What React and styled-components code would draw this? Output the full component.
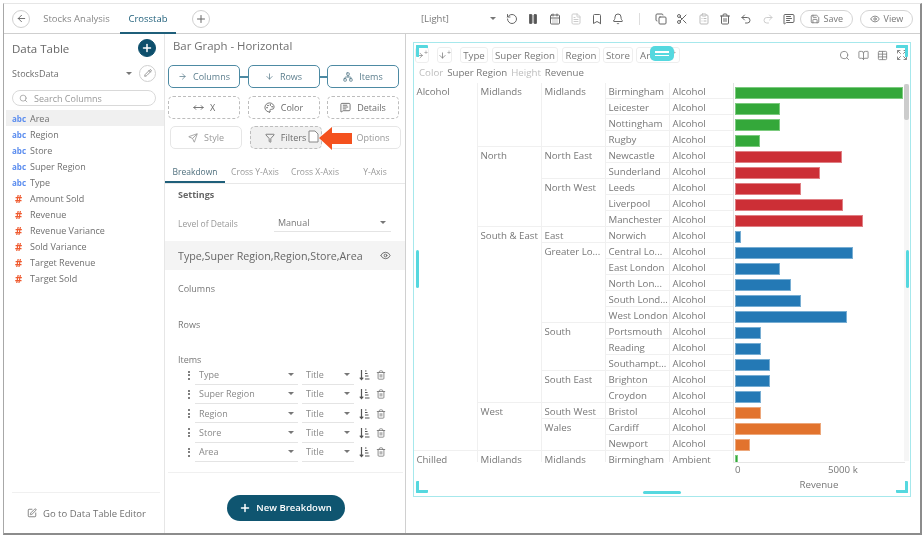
import React from "react";
import styled, { createGlobalStyle } from "styled-components";
import {
  ArrowLeft, Plus, RotateCw, Pause, Bookmark, Bell, Copy, Scissors, ClipboardList, Trash2, Undo2, Redo2,
  MessageSquareText, Eye, Search, Funnel, Palette, Settings, Pencil, Network, MoveHorizontal, ArrowRight,
  ArrowDown, SquarePen, Table, BookOpen, Expand, Save, FileText, Send, CalendarDays,
} from "lucide-react";

const Global = createGlobalStyle`
  html, body { margin: 0; padding: 0; background: #fff; width: 924px; height: 537px; overflow: hidden; }
  #root { width: 924px; height: 537px; }
  * { box-sizing: border-box; }
`;

const Frame = styled.div`
  margin: 3px 2px 2px 3px;
  width: 919px;
  height: 532px;
  border-left: 1px solid #a8a8a8;
  border-right: 2px solid #8c8c8c;
  border-bottom: 2px solid #8c8c8c;
  border-top: 1px solid #e6e6e6;
  display: flex;
  flex-direction: column;
  font-family: "Open Sans", "Liberation Sans", sans-serif;
  font-size: 9px;
  color: #6b6b6b;
  filter: blur(0.45px);
`;

const TopBar = styled.div`
  height: 30px;
  flex: none;
  display: flex;
  align-items: center;
  border-bottom: 1px solid #cfcfcf;
  padding-left: 8px;
`;

const RoundBtn = styled.button`
  width: ${(p) => p.$size || 18}px;
  height: ${(p) => p.$size || 18}px;
  margin-left: ${(p) => p.$ml || 0}px;
  flex: none;
  border-radius: 50%;
  border: 1px solid ${(p) => (p.$solid ? "#0d4f6c" : "#cfcfcf")};
  background: ${(p) => (p.$solid ? "#0d4f6c" : "#fff")};
  color: ${(p) => (p.$solid ? "#fff" : "#666")};
  display: flex;
  align-items: center;
  justify-content: center;
  padding: 0;
`;

const Tab = styled.div`
  height: 29px;
  display: flex;
  align-items: center;
  justify-content: center;
  width: ${(p) => p.$w}px;
  padding-left: ${(p) => p.$pl || 0}px;
  color: ${(p) => (p.$active ? "#1f5f7a" : "#888")};
  font-size: 9.5px;
  border-bottom: 2px solid ${(p) => (p.$active ? "#1f5f7a" : "transparent")};
  margin-bottom: -1px;
`;

const ThemeName = styled.div`
  margin-left: 211px;
  width: 69px;
  font-size: 9.5px;
  color: #777;
`;

const Caret = styled.span`
  display: inline-block;
  flex: none;
  width: 0;
  height: 0;
  border-left: ${(p) => p.$s || 3}px solid transparent;
  border-right: ${(p) => p.$s || 3}px solid transparent;
  border-top: ${(p) => p.$s || 3}px solid #777;
`;

const ToolIcons = styled.div`
  display: flex;
  align-items: center;
  color: #666;
  margin-left: 10px;
  gap: 9.3px;
  & > svg { flex: none; }
`;

const Divider = styled.span`
  width: 1px;
  height: 12px;
  background: #ddd;
  margin: 0 5.5px;
`;

const Pill = styled.button`
  height: 18px;
  width: ${(p) => p.$w}px;
  margin-left: ${(p) => p.$ml || 0}px;
  flex: none;
  border: 1px solid #d4d4d4;
  border-radius: 9px;
  background: #fff;
  font: inherit;
  font-size: 9px;
  color: #777;
  display: flex;
  align-items: center;
  justify-content: center;
  gap: 4px;
  padding: 0;
`;

const Body = styled.div`
  flex: 1;
  min-height: 0;
  display: flex;
`;

const LeftPanel = styled.aside`
  width: 161px;
  flex: none;
  border-right: 1px solid #e6e6e6;
  display: flex;
  flex-direction: column;
  padding-left: 2px;
`;

const LeftHead = styled.div`
  height: 27px;
  padding: 1px 8px 0 6px;
  display: flex;
  align-items: center;
  justify-content: space-between;
  font-size: 11.5px;
  color: #666;
`;

const SourceRow = styled.div`
  height: 26px;
  padding: 0 8px 2px 6px;
  display: flex;
  align-items: center;
  font-size: 9px;
  color: #6d6d6d;
  & > span:first-child { flex: 1; }
  & > ${Caret} { margin-right: 7px; }
`;

const SearchBox = styled.div`
  height: 16px;
  margin: 3px 6px 4px 6px;
  width: 144px;
  border: 1px solid #d9d9d9;
  border-radius: 8px;
  display: flex;
  align-items: center;
  gap: 6px;
  padding-left: 6px;
  font-size: 9px;
  color: #999;
`;

const FieldList = styled.div`
  flex: 1;
`;

const Field = styled.div`
  height: 16px;
  display: flex;
  align-items: center;
  padding-left: 6px;
  font-size: 9px;
  color: #6f6f6f;
  background: ${(p) => (p.$sel ? "#f0f0f0" : "transparent")};
`;

const FieldType = styled.span`
  width: 18px;
  flex: none;
  color: ${(p) => (p.$num ? "#ef5a2f" : "#5b8def")};
  font-size: ${(p) => (p.$num ? 11 : 8)}px;
  font-weight: 700;
  text-align: ${(p) => (p.$num ? "center" : "left")};
  padding-right: ${(p) => (p.$num ? 5 : 0)}px;
`;

const LeftFoot = styled.div`
  height: 41px;
  margin: 0 4px 0 6px;
  border-top: 1px solid #f0f0f0;
  display: flex;
  align-items: center;
  padding: 0 0 0 15px;
  gap: 6px;
  font-size: 9.5px;
  color: #707070;
`;

const MidPanel = styled.section`
  width: 241px;
  flex: none;
  border-right: 1px solid #d0d0d0;
  display: flex;
  flex-direction: column;
`;

const MidTitle = styled.div`
  height: 31px;
  padding: 4px 0 0 8px;
  line-height: 16px;
  font-size: 11.4px;
  color: #707070;
`;

const BtnRow = styled.div`
  display: grid;
  grid-template-columns: repeat(3, 72px);
  column-gap: 7.5px;
  padding-left: ${(p) => p.$pl || 3}px;
  margin-bottom: ${(p) => p.$mb || 0}px;
`;

const SlotBtn = styled.div`
  position: relative;
  height: 23px;
  border-radius: 5px;
  display: flex;
  align-items: center;
  justify-content: center;
  gap: 6px;
  font-size: 9px;
  color: ${(p) => (p.$kind === "solid" ? "#5d7f8e" : p.$kind === "plain" ? "#999" : "#6b6b6b")};
  border: ${(p) =>
    p.$kind === "solid" ? "1.5px solid #4d8aa3" : p.$kind === "plain" ? "1px solid #e6e6e6" : "1px dashed #bdbdbd"};
  background: ${(p) => (p.$active ? "#f0f0f0" : "#fff")};
  ${(p) =>
    p.$link &&
    `&::after { content: ""; position: absolute; right: -9px; top: 10px; width: 8px; height: 1.5px; background: #4d8aa3; }`}
`;

const DragArrow = styled.svg`
  position: absolute;
  left: 57px;
  top: -3px;
  z-index: 3;
`;

const MidTabs = styled.div`
  margin-top: 14px;
  height: 21px;
  display: grid;
  grid-template-columns: repeat(4, 60px);
  border-bottom: 1px solid #e8e8e8;
`;

const MidTab = styled.div`
  display: flex;
  align-items: center;
  justify-content: center;
  padding-bottom: 4px;
  font-size: 8.5px;
  white-space: nowrap;
  color: ${(p) => (p.$active ? "#50707e" : "#9a9a9a")};
  box-shadow: ${(p) => (p.$active ? "inset 0 -2px 0 #1f5f7a" : "none")};
`;

const SectionHead = styled.div`
  height: 22px;
  padding: 0 0 2px 13px;
  display: flex;
  align-items: center;
  font-size: 9px;
  font-weight: 700;
  color: #666;
`;

const DetailRow = styled.div`
  height: 35px;
  padding: 12px 14px 0 13px;
  display: flex;
  align-items: flex-start;
  font-size: 8.5px;
  color: #999;
`;

const DetailSelect = styled.div`
  margin: -4px 0 0 auto;
  width: 117px;
  height: 18px;
  border-bottom: 1px solid #e4e4e4;
  padding: 0 5px 0 4px;
  display: flex;
  align-items: center;
  justify-content: space-between;
  font-size: 9px;
  color: #777;
`;

const Band = styled.div`
  height: 29px;
  background: #f4f4f4;
  padding: 0 14px 0 13px;
  display: flex;
  align-items: center;
  justify-content: space-between;
  font-size: 10.7px;
  color: #666;
  white-space: nowrap;
`;

const SlotLabel = styled.div`
  height: 35.5px;
  padding: 13px 0 0 13px;
  font-size: 9px;
  line-height: 12px;
  color: #777;
`;

const ItemList = styled.div`
  margin-top: -11px;
  padding-left: 18px;
  height: 106px;
`;

const ItemRow = styled.div`
  height: 19.25px;
  display: flex;
  align-items: center;
`;

const Kebab = styled.span`
  width: 12px;
  flex: none;
  display: flex;
  flex-direction: column;
  align-items: center;
  gap: 1.5px;
  & > i { width: 2px; height: 2px; background: #555; display: block; border-radius: 1px; }
`;

const ItemSelect = styled.div`
  width: ${(p) => p.$w}px;
  margin-left: ${(p) => p.$ml || 0}px;
  height: 19.25px;
  padding: 0 4px;
  flex: none;
  display: flex;
  align-items: center;
  justify-content: space-between;
  border-bottom: 1px solid #e4e4e4;
  font-size: 9px;
  color: #888;
`;

const ItemIcons = styled.div`
  display: flex;
  align-items: center;
  margin-left: 5px;
  gap: 6px;
  color: #777;
`;

const MidFoot = styled.div`
  flex: 1;
  margin: 0 2px 0 3px;
  border-top: 1px solid #f0f0f0;
  display: flex;
  justify-content: center;
  padding-top: 22px;
`;

const PrimaryBtn = styled.button`
  width: 118px;
  height: 26px;
  border: 0;
  border-radius: 13px;
  background: #0f5570;
  color: #fff;
  font: inherit;
  font-size: 9.5px;
  font-weight: 600;
  display: flex;
  align-items: center;
  justify-content: center;
  gap: 5px;
  padding: 0;
`;

const RightPanel = styled.main`
  flex: 1;
  min-width: 0;
  padding: 8px 0 0 7px;
`;

const Widget = styled.div`
  position: relative;
  width: 498px;
  height: 455px;
  border: 1px solid #a6e8ec;
  display: flex;
  flex-direction: column;
`;

const WidgetHead = styled.div`
  height: 20px;
  flex: none;
  padding: 4px 2px 0 1px;
  display: flex;
  align-items: center;
`;

const Chip = styled.div`
  height: 16px;
  width: ${(p) => p.$w}px;
  margin-left: ${(p) => p.$ml || 0}px;
  flex: none;
  border: 1px solid #eeeeee;
  border-radius: 3px;
  padding: 0 ${(p) => (p.$split ? 3 : 0)}px;
  display: flex;
  align-items: center;
  justify-content: ${(p) => (p.$split ? "space-between" : "center")};
  font-size: 9.7px;
  color: #777;
  white-space: nowrap;
`;

const ChipPlus = styled.sup`
  font-size: 7px;
  line-height: 7px;
  margin-bottom: 5px;
  color: #888;
`;

const HeadIcons = styled.div`
  margin-left: auto;
  display: flex;
  align-items: center;
  gap: 8px;
  color: #888;
`;

const Legend = styled.div`
  height: 20px;
  flex: none;
  padding: 0 0 2px 5px;
  display: flex;
  align-items: center;
  gap: 4px;
  font-size: 9.7px;
`;

const LegendKey = styled.span`
  color: #bdbdbd;
`;

const LegendVal = styled.span`
  color: #777;
`;

const CrossTab = styled.div`
  display: grid;
  flex: none;
  grid-template-columns: 63px 64px 64px 64px 64px 171px;
  grid-template-rows: repeat(23, 16px) 11px;
  margin-right: 5px;
`;

const Cell = styled.div`
  grid-column: ${(p) => p.$col};
  grid-row: ${(p) => p.$row} / span ${(p) => p.$span || 1};
  padding: 2px 0 0 2.5px;
  line-height: 13px;
  font-size: 9.7px;
  color: #777;
  white-space: nowrap;
  border-left: ${(p) => (p.$col > 1 ? "1px solid #f0f0f0" : "0")};
  border-bottom: ${(p) => (p.$row + (p.$span || 1) - 1 === 24 ? "0" : "1px solid #f0f0f0")};
`;

const BarCell = styled.div`
  grid-column: 6;
  grid-row: ${(p) => p.$row};
  border-left: 1px solid #e2e2e2;
  padding: 4px 0 0 1px;
  overflow: hidden;
`;

const Bar = styled.div`
  height: 12px;
  background: ${(p) => p.$c};
  border: 1px solid ${(p) => p.$edge};
`;

const Axis = styled.div`
  margin-left: 319px;
  width: 172px;
  height: 34px;
  flex: none;
  border-top: 1px solid #e6e6e6;
  display: grid;
  grid-template-columns: 110px 1fr;
  grid-template-rows: 14px 20px;
  font-size: 9.7px;
  color: #777;
`;

const TickZero = styled.div`
  padding-left: 2px;
`;

const TickFive = styled.div`
  margin-left: -15px;
`;

const AxisTitle = styled.div`
  grid-column: 1 / -1;
  text-align: center;
  padding-top: 1px;
`;

const ScrollTrack = styled.div`
  position: absolute;
  right: 1px;
  top: 41px;
  width: 5px;
  height: 377px;
  background: #f6f6f6;
  & > i { display: block; height: 36px; background: #cccccc; border-radius: 2px; }
`;

const Handle = styled.div`
  position: absolute;
  background: #55d8df;
  border-radius: 2px;
`;

const TopHandle = styled(Handle)`
  left: 236px;
  top: 3px;
  width: 24px;
  height: 15px;
  border-radius: 5px;
  display: flex;
  flex-direction: column;
  justify-content: center;
  gap: 2px;
  padding: 0 5px;
  & > i { height: 1.5px; background: #fff; display: block; }
`;

const BottomHandle = styled(Handle)`
  left: 229px;
  bottom: 2px;
  width: 38px;
  height: 3px;
`;

const SideHandle = styled(Handle)`
  top: 207px;
  width: 3px;
  height: 38px;
  ${(p) => (p.$right ? "right: 1px;" : "left: 2px;")}
`;

const Corner = styled.div`
  position: absolute;
  width: 12px;
  height: 12px;
  ${(p) => (p.$b ? "bottom: 3px;" : "top: 2px;")}
  ${(p) => (p.$r ? "right: 2px;" : "left: 2px;")}
  border-style: solid;
  border-color: #55d8df;
  border-width: ${(p) => `${p.$b ? 0 : 3}px ${p.$r ? 3 : 0}px ${p.$b ? 3 : 0}px ${p.$r ? 0 : 3}px`};
  border-radius: 1px;
`;

const COL = {
  g: ["#34a83a", "#7ccb7f"],
  r: ["#cc2f36", "#e08085"],
  b: ["#2479b5", "#78aed3"],
  o: ["#e2732d", "#eda87c"],
};

const fields = [
  ["Area", 0], ["Region", 0], ["Store", 0], ["Super Region", 0], ["Type", 0],
  ["Amount Sold", 1], ["Revenue", 1], ["Revenue Variance", 1], ["Sold Variance", 1], ["Target Revenue", 1], ["Target Sold", 1],
];

const types = [["Alcohol", 1, 23], ["Chilled", 24, 1]];
const supers = [["Midlands", 1, 4], ["North", 5, 5], ["South & East", 10, 11], ["West", 21, 3], ["Midlands", 24, 1]];
const regions = [
  ["Midlands", 1, 4], ["North East", 5, 2], ["North West", 7, 3], ["East", 10, 1], ["Greater Lo...", 11, 5],
  ["South", 16, 3], ["South East", 19, 2], ["South West", 21, 1], ["Wales", 22, 2], ["Midlands", 24, 1],
];
const stores = [
  ["Birmingham", 168, "g"], ["Leicester", 45, "g"], ["Nottingham", 45, "g"], ["Rugby", 25, "g"],
  ["Newcastle", 107, "r"], ["Sunderland", 85, "r"], ["Leeds", 66, "r"], ["Liverpool", 108, "r"], ["Manchester", 128, "r"],
  ["Norwich", 6, "b"], ["Central Lo...", 118, "b"], ["East London", 45, "b"], ["North Lon...", 56, "b"], ["South Lond...", 66, "b"],
  ["West London", 112, "b"], ["Portsmouth", 26, "b"], ["Reading", 26, "b"], ["Southampt...", 35, "b"], ["Brighton", 35, "b"], ["Croydon", 26, "b"],
  ["Bristol", 26, "o"], ["Cardiff", 86, "o"], ["Newport", 15, "o"], ["Birmingham", 3, "g"],
];

const items = ["Type", "Super Region", "Region", "Store", "Area"];

const SortIcon = () => (
  <svg width="11" height="12" viewBox="0 0 11 12" fill="none" stroke="#555" strokeWidth="1.2">
    <path d="M2.5 1v9.5M.8 8.6l1.7 2 1.7-2" />
    <path d="M6 2h1.5M6 4.5h2.5M6 7h3.5M6 10h4.5" />
  </svg>
);

export default function App() {
  return (
    <>
      <Global />
      <Frame>
        <TopBar>
          <RoundBtn><ArrowLeft size={11} /></RoundBtn>
          <Tab $w={90} $pl={3}>Stocks Analysis</Tab>
          <Tab $w={56} $active>Crosstab</Tab>
          <RoundBtn $ml={16}><Plus size={12} /></RoundBtn>
          <ThemeName>[Light]</ThemeName>
          <Caret />
          <ToolIcons>
            <RotateCw size={12} style={{ transform: "scaleX(-1)" }} />
            <Pause size={12} fill="#555" />
            <CalendarDays size={12} />
            <FileText size={12} color="#ccc" />
            <Bookmark size={12} />
            <Bell size={12} />
            <Divider />
            <Copy size={12} />
            <Scissors size={12} />
            <ClipboardList size={12} color="#bbb" />
            <Trash2 size={12} />
            <Undo2 size={12} />
            <Redo2 size={12} color="#ccc" />
            <MessageSquareText size={12} />
          </ToolIcons>
          <Pill $w={53} $ml={5}><Save size={10} />Save</Pill>
          <Pill $w={53} $ml={7}><Eye size={10} />View</Pill>
        </TopBar>
        <Body>
          <LeftPanel>
            <LeftHead>
              Data Table
              <RoundBtn $solid><Plus size={12} strokeWidth={3} /></RoundBtn>
            </LeftHead>
            <SourceRow>
              <span>StocksData</span>
              <Caret />
              <RoundBtn $size={17}><Pencil size={8} /></RoundBtn>
            </SourceRow>
            <SearchBox><Search size={9} />Search Columns</SearchBox>
            <FieldList>
              {fields.map(([name, num], i) => (
                <Field key={name} $sel={i === 0}>
                  <FieldType $num={num}>{num ? "#" : "abc"}</FieldType>
                  {name}
                </Field>
              ))}
            </FieldList>
            <LeftFoot><SquarePen size={10} />Go to Data Table Editor</LeftFoot>
          </LeftPanel>
          <MidPanel>
            <MidTitle>Bar Graph - Horizontal</MidTitle>
            <BtnRow $mb={8}>
              <SlotBtn $kind="solid" $link><ArrowRight size={9} />Columns</SlotBtn>
              <SlotBtn $kind="solid" $link><ArrowDown size={9} />Rows</SlotBtn>
              <SlotBtn $kind="solid"><Network size={10} />Items</SlotBtn>
            </BtnRow>
            <BtnRow $mb={7}>
              <SlotBtn><MoveHorizontal size={11} />X</SlotBtn>
              <SlotBtn><Palette size={11} />Color</SlotBtn>
              <SlotBtn><MessageSquareText size={11} />Details</SlotBtn>
            </BtnRow>
            <BtnRow $pl={5}>
              <SlotBtn $kind="plain"><Send size={10} />Style</SlotBtn>
              <SlotBtn $active>
                <Funnel size={10} />Filters
                <DragArrow width="46" height="28" viewBox="0 0 46 28">
                  <path d="M1 7h6l3 3v8H1z" fill="#fff" stroke="#888" strokeWidth="1" />
                  <path d="M11 14 L24 3 V9 H44 V20 H24 V26 Z" fill="#f4511e" />
                </DragArrow>
              </SlotBtn>
              <SlotBtn $kind="plain"><Settings size={10} />Options</SlotBtn>
            </BtnRow>
            <MidTabs>
              <MidTab $active>Breakdown</MidTab>
              <MidTab>Cross Y-Axis</MidTab>
              <MidTab>Cross X-Axis</MidTab>
              <MidTab>Y-Axis</MidTab>
            </MidTabs>
            <SectionHead>Settings</SectionHead>
            <DetailRow>
              Level of Details
              <DetailSelect>Manual<Caret /></DetailSelect>
            </DetailRow>
            <Band>Type,Super Region,Region,Store,Area<Eye size={11} /></Band>
            <SlotLabel>Columns</SlotLabel>
            <SlotLabel>Rows</SlotLabel>
            <SlotLabel>Items</SlotLabel>
            <ItemList>
              {items.map((name) => (
                <ItemRow key={name}>
                  <Kebab><i /><i /><i /></Kebab>
                  <ItemSelect $w={103}>{name}<Caret /></ItemSelect>
                  <ItemSelect $w={52} $ml={4}>Title<Caret /></ItemSelect>
                  <ItemIcons>
                    <SortIcon />
                    <Trash2 size={10} />
                  </ItemIcons>
                </ItemRow>
              ))}
            </ItemList>
            <MidFoot>
              <PrimaryBtn><Plus size={12} strokeWidth={3} />New Breakdown</PrimaryBtn>
            </MidFoot>
          </MidPanel>
          <RightPanel>
            <Widget>
              <WidgetHead>
                <Chip $w={14}><ArrowRight size={9} /><ChipPlus>+</ChipPlus></Chip>
                <Chip $w={15} $ml={8}><ArrowDown size={9} /><ChipPlus>+</ChipPlus></Chip>
                <Chip $w={28} $ml={8}>Type</Chip>
                <Chip $w={66} $ml={4}>Super Region</Chip>
                <Chip $w={38} $ml={4}>Region</Chip>
                <Chip $w={30} $ml={3}>Store</Chip>
                <Chip $w={44} $ml={3} $split>Area<ChipPlus>+</ChipPlus></Chip>
                <HeadIcons>
                  <Search size={11} />
                  <BookOpen size={11} />
                  <Table size={11} />
                  <Expand size={12} />
                </HeadIcons>
              </WidgetHead>
              <Legend>
                <LegendKey>Color</LegendKey>
                <LegendVal>Super Region</LegendVal>
                <LegendKey>Height</LegendKey>
                <LegendVal>Revenue</LegendVal>
              </Legend>
              <CrossTab>
                {types.map(([t, r, s]) => <Cell key={r} $col={1} $row={r} $span={s}>{t}</Cell>)}
                {supers.map(([t, r, s]) => <Cell key={r} $col={2} $row={r} $span={s}>{t}</Cell>)}
                {regions.map(([t, r, s]) => <Cell key={r} $col={3} $row={r} $span={s}>{t}</Cell>)}
                {stores.map(([t, w, c], i) => (
                  <React.Fragment key={i}>
                    <Cell $col={4} $row={i + 1}>{t}</Cell>
                    <Cell $col={5} $row={i + 1}>{i === 23 ? "Ambient" : "Alcohol"}</Cell>
                    <BarCell $row={i + 1}>
                      <Bar $c={COL[c][0]} $edge={COL[c][1]} style={{ width: w }} />
                    </BarCell>
                  </React.Fragment>
                ))}
              </CrossTab>
              <Axis>
                <TickZero>0</TickZero>
                <TickFive>5000 k</TickFive>
                <AxisTitle>Revenue</AxisTitle>
              </Axis>
              <ScrollTrack><i /></ScrollTrack>
              <TopHandle><i /><i /></TopHandle>
              <BottomHandle />
              <SideHandle />
              <SideHandle $right />
              <Corner />
              <Corner $r />
              <Corner $b />
              <Corner $b $r />
            </Widget>
          </RightPanel>
        </Body>
      </Frame>
    </>
  );
}
